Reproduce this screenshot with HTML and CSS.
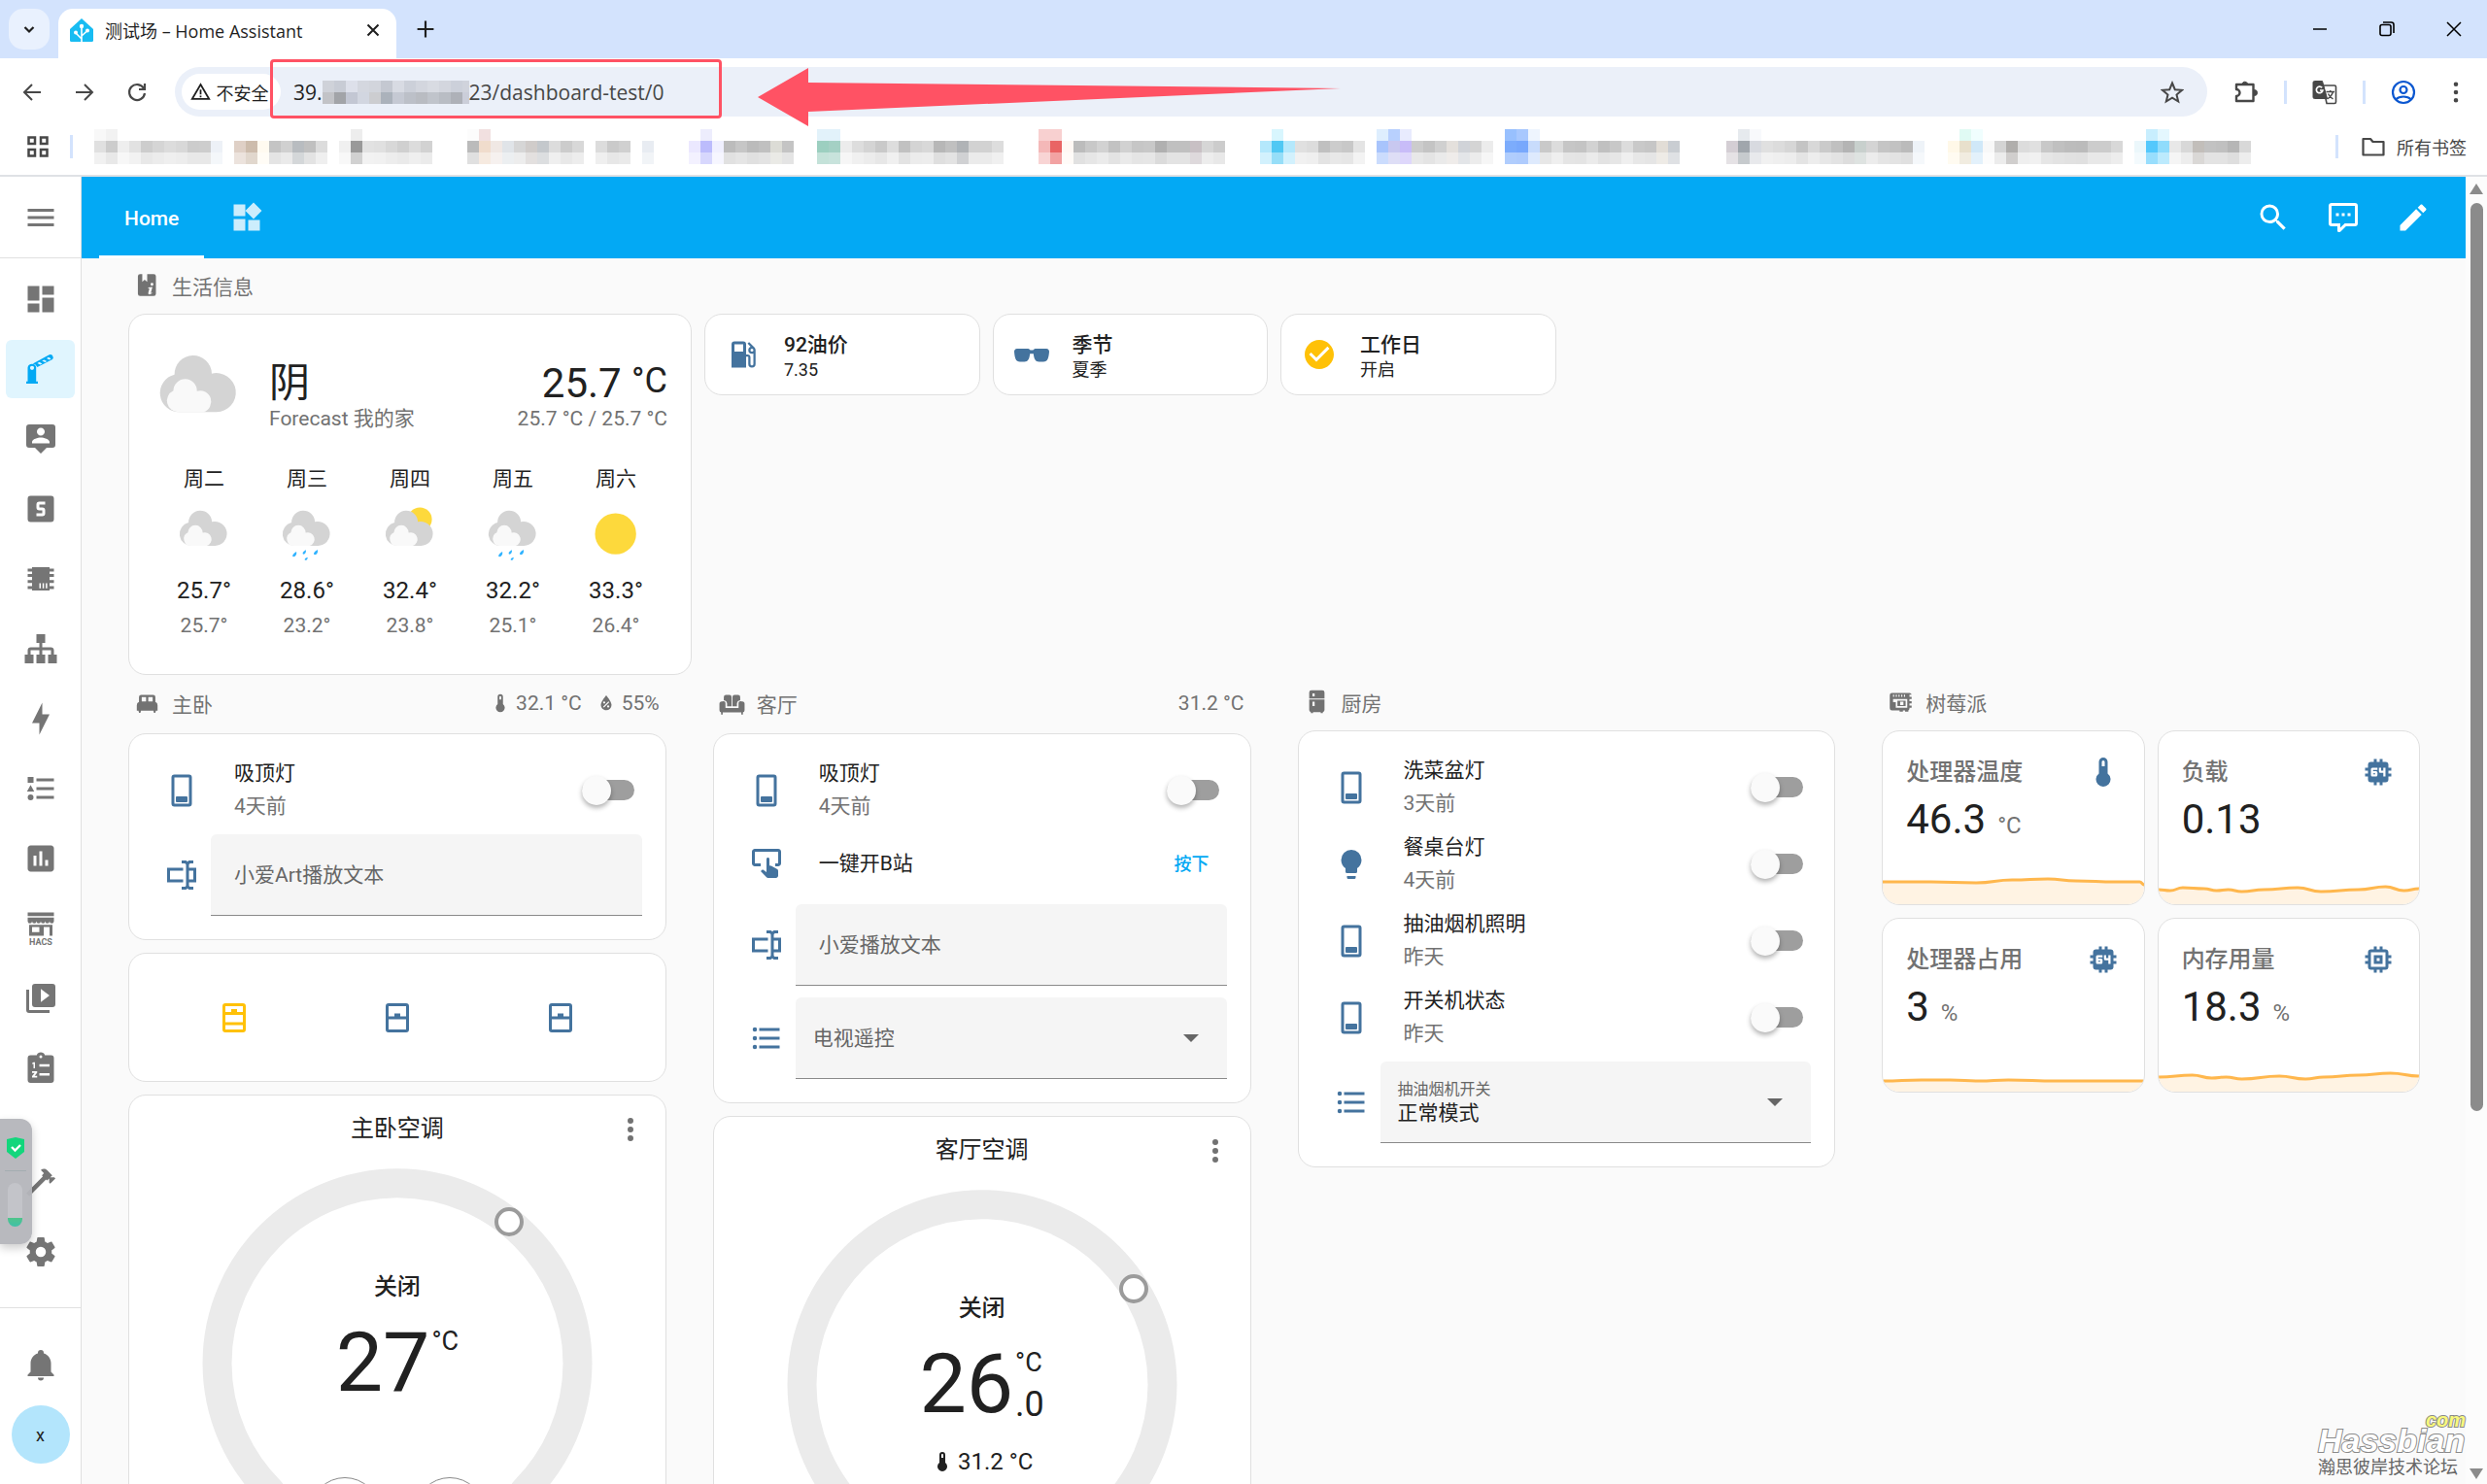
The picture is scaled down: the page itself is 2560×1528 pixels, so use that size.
FILE: index.html
```html
<!DOCTYPE html>
<html lang="zh-CN">
<head>
  <meta charset="utf-8">
  <title>测试场 – Home Assistant</title>
  <link rel="stylesheet" href="styles.css">
</head>
<body>

<!-- Icon set -->
<svg class="sprite" aria-hidden="true">
  <symbol id="menu" viewBox="0 0 24 24"><path d="M3,6H21V8H3V6M3,11H21V13H3V11M3,16H21V18H3V16Z"/></symbol>
  <symbol id="dashboard" viewBox="0 0 24 24"><path d="M13,3V9H21V3M13,21H21V11H13M3,21H11V15H3M3,13H11V3H3V13Z"/></symbol>
  <symbol id="gate" viewBox="0 0 24 24"><path d="M2,22V20.5H3V11A3,3 0 0 1 6,8.5A3,3 0 0 1 8.8,10.5V20.5H10V22ZM6,9.8A1.4,1.4 0 1 0 6,12.6A1.4,1.4 0 1 0 6,9.8Z"/><path d="M6.5,8.3L17.8,2.2A2,2 0 0 1 20,5.4L9.6,10.6A4,4 0 0 0 6.5,8.3ZM9.6,8L11.6,9L13,8.3L11,7.2ZM12.8,6.3L14.9,7.4L16.2,6.7L14.2,5.6ZM16,4.6L18,5.6L19,4.8L17.3,3.9Z"/></symbol>
  <symbol id="account" viewBox="0 0 24 24"><path d="M20,2H4A2,2 0 0,0 2,4V16A2,2 0 0,0 4,18H8L12,22L16,18H20A2,2 0 0,0 22,16V4A2,2 0 0,0 20,2M12,4.3C13.5,4.3 14.7,5.5 14.7,7C14.7,8.5 13.5,9.7 12,9.7C10.5,9.7 9.3,8.5 9.3,7C9.3,5.5 10.5,4.3 12,4.3M18,15H6V14.1C6,12.1 10,11 12,11C14,11 18,12.1 18,14.1V15Z"/></symbol>
  <symbol id="sbox" viewBox="0 0 24 24"><path d="M5,3H19A2,2 0 0,1 21,5V19A2,2 0 0,1 19,21H5A2,2 0 0,1 3,19V5A2,2 0 0,1 5,3M11,7A2,2 0 0,0 9,9V11A2,2 0 0,0 11,13H13V15H9V17H13A2,2 0 0,0 15,15V13A2,2 0 0,0 13,11H11V9H15V7H11Z"/></symbol>
  <symbol id="chip" viewBox="0 0 24 24"><path d="M6,4H18V5H21V7H18V8.7H21V10.7H18V12.8H21V14.8H18V17H21V19H18V20H6V19H3V17H6V14.8H3V12.8H6V10.7H3V8.7H6V7H3V5H6ZM11,15V18.5H12V15ZM13.2,15V18.5H14.2V15ZM15.4,15V18.5H16.4V15Z"/></symbol>
  <symbol id="sitemap" viewBox="0 0 24 24"><path d="M9,2V8H11V11H5C3.89,11 3,11.89 3,13V16H1V22H7V16H5V13H11V16H9V22H15V16H13V13H19V16H17V22H23V16H21V13C21,11.89 20.11,11 19,11H13V8H15V2H9Z"/></symbol>
  <symbol id="bolt" viewBox="0 0 24 24"><path d="M11 15H6L13 1V9H18L11 23V15Z"/></symbol>
  <symbol id="logbook" viewBox="0 0 24 24"><path d="M5,9.5L7.5,14H2.5L5,9.5M3,4H7V8H3V4M5,20A2,2 0 0,0 7,18A2,2 0 0,0 5,16A2,2 0 0,0 3,18A2,2 0 0,0 5,20M9,5V7H21V5H9M9,19H21V17H9V19M9,13H21V11H9V13Z"/></symbol>
  <symbol id="chart" viewBox="0 0 24 24"><path d="M9 17H7V10H9V17M13 17H11V7H13V17M17 17H15V13H17V17M19 3H5C3.9 3 3 3.9 3 5V19C3 20.1 3.9 21 5 21H19C20.1 21 21 20.1 21 19V5C21 3.9 20.1 3 19 3Z"/></symbol>
  <symbol id="media" viewBox="0 0 24 24"><path d="M4,6H2V20A2,2 0 0,0 4,22H18V20H4V6M20,2H8A2,2 0 0,0 6,4V16A2,2 0 0,0 8,18H20A2,2 0 0,0 22,16V4A2,2 0 0,0 20,2M12,14.5V5.5L18,10L12,14.5Z"/></symbol>
  <symbol id="todo" viewBox="0 0 24 24"><path d="M5,3H9.2A3,3 0 0 1 14.8,3H19A2,2 0 0 1 21,5V20A2,2 0 0 1 19,22H5A2,2 0 0 1 3,20V5A2,2 0 0 1 5,3ZM12,3A1,1 0 1 0 12,5A1,1 0 1 0 12,3ZM6,8.5L7,7.8H8V12H7V9H6ZM11,9.2H18V10.8H11ZM6,14H9.5V15L7.8,17.2H9.5V18.4H6V17.3L7.8,15.2H6ZM11,15.4H18V17H11Z"/></symbol>
  <symbol id="hammer" viewBox="0 0 24 24"><path d="M2 19.63L13.43 8.2L12.72 7.5L14.14 6.07L12 3.89C13.2 2.7 15.09 2.7 16.27 3.89L19.87 7.5L18.45 8.91H21.29L22 9.62L18.45 13.21L17.74 12.5V9.62L16.27 11.04L15.56 10.33L4.13 21.76L2 19.63Z"/></symbol>
  <symbol id="cog" viewBox="0 0 24 24"><path d="M12,15.5A3.5,3.5 0 0,1 8.5,12A3.5,3.5 0 0,1 12,8.5A3.5,3.5 0 0,1 15.5,12A3.5,3.5 0 0,1 12,15.5M19.43,12.97C19.47,12.65 19.5,12.33 19.5,12C19.5,11.67 19.47,11.34 19.43,11L21.54,9.37C21.73,9.22 21.78,8.95 21.66,8.73L19.66,5.27C19.54,5.05 19.27,4.96 19.05,5.05L16.56,6.05C16.04,5.66 15.5,5.32 14.87,5.07L14.5,2.42C14.46,2.18 14.25,2 14,2H10C9.75,2 9.54,2.18 9.5,2.42L9.13,5.07C8.5,5.32 7.96,5.66 7.44,6.05L4.95,5.05C4.73,4.96 4.46,5.05 4.34,5.27L2.34,8.73C2.21,8.95 2.27,9.22 2.46,9.37L4.57,11C4.53,11.34 4.5,11.67 4.5,12C4.5,12.33 4.53,12.65 4.57,12.97L2.46,14.63C2.27,14.78 2.21,15.05 2.34,15.27L4.34,18.73C4.46,18.95 4.73,19.03 4.95,18.95L7.44,17.94C7.96,18.34 8.5,18.68 9.13,18.93L9.5,21.58C9.54,21.82 9.75,22 10,22H14C14.25,22 14.46,21.82 14.5,21.58L14.87,18.93C15.5,18.67 16.04,18.34 16.56,17.94L19.05,18.95C19.27,19.03 19.54,18.95 19.66,18.73L21.66,15.27C21.78,15.05 21.73,14.78 21.54,14.63L19.43,12.97Z"/></symbol>
  <symbol id="bell" viewBox="0 0 24 24"><path d="M21,19V20H3V19L5,17V11C5,7.9 7.03,5.17 10,4.29C10,4.19 10,4.1 10,4A2,2 0 0,1 12,2A2,2 0 0,1 14,4C14,4.1 14,4.19 14,4.29C16.97,5.17 19,7.9 19,11V17L21,19M14,21A2,2 0 0,1 12,23A2,2 0 0,1 10,21"/></symbol>
  <symbol id="widgets" viewBox="0 0 24 24"><path d="M3,3H11V11H3V3M16.66,1.69L22.31,7.34L16.66,13L11,7.34L16.66,1.69M13,13.6H21V21H13V13.6M3,13H11V21H3V13Z"/></symbol>
  <symbol id="search" viewBox="0 0 24 24"><path d="M9.5,3A6.5,6.5 0 0,1 16,9.5C16,11.11 15.41,12.59 14.44,13.73L14.71,14H15.5L20.5,19L19,20.5L14,15.5V14.71L13.73,14.44C12.59,15.41 11.11,16 9.5,16A6.5,6.5 0 0,1 3,9.5A6.5,6.5 0 0,1 9.5,3M9.5,5C7,5 5,7 5,9.5C5,12 7,14 9.5,14C12,14 14,12 14,9.5C14,7 12,5 9.5,5Z"/></symbol>
  <symbol id="comment" viewBox="0 0 24 24"><path d="M9,22A1,1 0 0,1 8,21V18H4A2,2 0 0,1 2,16V4C2,2.89 2.9,2 4,2H20A2,2 0 0,1 22,4V16A2,2 0 0,1 20,18H13.9L10.2,21.71C10,21.9 9.75,22 9.5,22H9M10,16V19.08L13.08,16H20V4H4V16H10M17,11H15V9H17V11M13,11H11V9H13V11M9,11H7V9H9V11Z"/></symbol>
  <symbol id="pencil" viewBox="0 0 24 24"><path d="M20.71,7.04C21.1,6.65 21.1,6 20.71,5.63L18.37,3.29C18,2.9 17.35,2.9 16.96,3.29L15.12,5.12L18.87,8.87M3,17.25V21H6.75L17.81,9.93L14.06,6.18L3,17.25Z"/></symbol>
  <symbol id="gas" viewBox="0 0 24 24"><path d="M18,10A1,1 0 0,1 17,9A1,1 0 0,1 18,8A1,1 0 0,1 19,9A1,1 0 0,1 18,10M12,10H6V5H12M19.77,7.23L19.78,7.22L16.06,3.5L15,4.56L17.11,6.67C16.17,7 15.5,7.93 15.5,9A2.5,2.5 0 0,0 18,11.5C18.36,11.5 18.69,11.42 19,11.29V18.5A1,1 0 0,1 18,19.5A1,1 0 0,1 17,18.5V14A2,2 0 0,0 15,12H14V5A2,2 0 0,0 12,3H6A2,2 0 0,0 4,5V21H14V13.5H15.5V18.5A2.5,2.5 0 0,0 18,21A2.5,2.5 0 0,0 20.5,18.5V9C20.5,8.31 20.22,7.68 19.77,7.23Z"/></symbol>
  <symbol id="glasses" viewBox="0 0 24 24"><path d="M2,8H9.5C10.5,8 10.6,9 11.2,9H12.8C13.4,9 13.5,8 14.5,8H22C23.4,8 24,9 24,10C23.6,14.5 23,17 20,17H17C14.5,17 13.6,15 13.2,11.5H10.8C10.4,15 9.500,17 7,17H4C1,17 .4,14.500 0,10C0,9 .6,8 2,8Z"/></symbol>
  <symbol id="check" viewBox="0 0 24 24"><path d="M12 2C6.5 2 2 6.5 2 12S6.5 22 12 22 22 17.5 22 12 17.5 2 12 2M10 17L5 12L6.41 10.59L10 14.17L17.59 6.58L19 8L10 17Z"/></symbol>
  <symbol id="switch" viewBox="0 0 24 24"><path d="M7,1H17A2,2 0 0 1 19,3V21A2,2 0 0 1 17,23H7A2,2 0 0 1 5,21V3A2,2 0 0 1 7,1ZM7,3V21H17V3ZM8.6,16H15.4A.6,.6 0 0 1 16,16.600V19.4A.6,.6 0 0 1 15.4,20H8.600A.6,.6 0 0 1 8,19.4V16.600A.6,.6 0 0 1 8.600,16Z"/></symbol>
  <symbol id="tap" viewBox="0 0 24 24"><path d="M20 20.5C19.97 21.32 19.32 21.97 18.5 22H13C12.62 22 12.26 21.85 12 21.57L8 17.37L8.74 16.6C8.93 16.39 9.2 16.28 9.5 16.28H9.7L12 18V9C12 8.45 12.45 8 13 8S14 8.45 14 9V13.47L15.21 13.6L19.15 15.79C19.68 16.03 20 16.56 20 17.14V20.5M20 2H4C2.9 2 2 2.9 2 4V12C2 13.11 2.9 14 4 14H8V12H4V4H20V12H18V14H20C21.1 14 22 13.1 22 12V4C22 2.89 21.1 2 20 2Z"/></symbol>
  <symbol id="textbox" viewBox="0 0 24 24"><path d="M17,7H22V17H17V19A1,1 0 0,0 18,20H20V22H17.5C16.95,22 16,21.55 16,21C16,21.55 15.05,22 14.5,22H12V20H14A1,1 0 0,0 15,19V5A1,1 0 0,0 14,4H12V2H14.5C15.05,2 16,2.45 16,3C16,2.45 16.95,2 17.5,2H20V4H18A1,1 0 0,0 17,5V7M2,7H13V9H4V15H13V17H2V7M20,15V9H17V15H20Z"/></symbol>
  <symbol id="list" viewBox="0 0 24 24"><path d="M7,5H21V7H7V5M7,13V11H21V13H7M4,4.5A1.5,1.5 0 0,1 5.5,6A1.5,1.5 0 0,1 4,7.5A1.5,1.5 0 0,1 2.5,6A1.5,1.5 0 0,1 4,4.5M4,10.5A1.5,1.5 0 0,1 5.5,12A1.5,1.5 0 0,1 4,13.5A1.5,1.5 0 0,1 2.5,12A1.5,1.5 0 0,1 4,10.5M7,19V17H21V19H7M4,16.5A1.5,1.5 0 0,1 5.5,18A1.5,1.5 0 0,1 4,19.5A1.5,1.5 0 0,1 2.5,18A1.5,1.5 0 0,1 4,16.5Z"/></symbol>
  <symbol id="bulb" viewBox="0 0 24 24"><path d="M12,2A7,7 0 0,0 5,9C5,11.38 6.19,13.47 8,14.74V17A1,1 0 0,0 9,18H15A1,1 0 0,0 16,17V14.74C17.81,13.47 19,11.38 19,9A7,7 0 0,0 12,2M9,21A1,1 0 0,0 10,22H14A1,1 0 0,0 15,21V20H9V21Z"/></symbol>
  <symbol id="thermo" viewBox="0 0 24 24"><path d="M15 13V5A3 3 0 0 0 9 5V13A5 5 0 1 0 15 13M12 4A1 1 0 0 1 13 5V8H11V5A1 1 0 0 1 12 4Z"/></symbol>
  <symbol id="humidity" viewBox="0 0 24 24"><path d="M12,3.25C12,3.25 6,10 6,14C6,17.32 8.69,20 12,20A6,6 0 0,0 18,14C18,10 12,3.25 12,3.25M14.47,9.97L15.53,11.03L9.53,17.03L8.47,15.97M9.75,10A1.25,1.25 0 0,1 11,11.25A1.25,1.25 0 0,1 9.75,12.5A1.25,1.25 0 0,1 8.5,11.25A1.25,1.25 0 0,1 9.75,10M14.25,14.5A1.25,1.25 0 0,1 15.5,15.75A1.25,1.25 0 0,1 14.25,17A1.25,1.25 0 0,1 13,15.75A1.25,1.25 0 0,1 14.25,14.5Z"/></symbol>
  <symbol id="cpu" viewBox="0 0 24 24"><path d="M9,3V5H7A2,2 0 0,0 5,7V9H3V11H5V13H3V15H5V17A2,2 0 0,0 7,19H9V21H11V19H13V21H15V19H17A2,2 0 0,0 19,17V15H21V13H19V11H21V9H19V7A2,2 0 0,0 17,5H15V3H13V5H11V3M8,9H11.5V10.5H8.5V11.25H10.5A1,1 0 0,1 11.5,12.25V14A1,1 0 0,1 10.5,15H8A1,1 0 0,1 7,14V10A1,1 0 0,1 8,9M12.5,9H14V11H15.5V9H17V15H15.5V12.5H13.5A1,1 0 0,1 12.5,11.5M8.5,12.75V13.5H10V12.75"/></symbol>
  <symbol id="memory" viewBox="0 0 24 24"><path d="M17,17H7V7H17M21,11V9H19V7C19,5.89 18.1,5 17,5H15V3H13V5H11V3H9V5H7C5.89,5 5,5.89 5,7V9H3V11H5V13H3V15H5V17A2,2 0 0,0 7,19H9V21H11V19H13V21H15V19H17A2,2 0 0,0 19,17V15H21V13H19V11M13,13H11V11H13M15,9H9V15H15V9Z"/></symbol>
  <symbol id="book" viewBox="0 0 24 24"><path d="M5.500,2H7.500V9L9.700,7.200L12,9V2H18A2,2 0 0 1 20,4V20A2,2 0 0 1 18,22H5.500A2,2 0 0 1 3.500,20V4A2,2 0 0 1 5.500,2ZM16.400,10A1.300,1.300 0 1 0 16.400,12.600A1.300,1.300 0 1 0 16.400,10ZM13,14.200V15H14L13,19.200A1.200,1.200 0 0 0 14.200,20.700L16.500,19.600V18.900L15.300,19.300L16.800,13.700Z"/></symbol>
  <symbol id="bed" viewBox="0 0 24 24"><path d="M6.500,4H17.500A2,2 0 0 1 19.500,6V10.500A3,3 0 0 1 21.500,13.500V18.500H20L19.400,20.500H18.200L17.700,18.500H6.300L5.800,20.500H4.600L4,18.500H2.500V13.500A3,3 0 0 1 4.500,10.500V6A2,2 0 0 1 6.500,4ZM7,6V10H11V6ZM13,6V10H17V6Z"/></symbol>
  <symbol id="sofa" viewBox="0 0 24 24"><path d="M6.5,4H9.5A2,2 0 0 1 11.6,6V14.500H7.500V12A3.500,3.500 0 0 0 4.500,8.800V6A2,2 0 0 1 6.500,4ZM14.500,4H17.500A2,2 0 0 1 19.500,6V8.800A3.500,3.500 0 0 0 16.500,12V14.500H12.400V6A2,2 0 0 1 14.500,4ZM3,10A2,2 0 0 1 6,12V16H18V12A2,2 0 0 1 21,10A2,2 0 0 1 23.500,12V18A2,2 0 0 1 22,20V22H20.500V20H3.500V22H2V20A2,2 0 0 1 .5,18V12A2,2 0 0 1 3,10Z"/></symbol>
  <symbol id="fridge" viewBox="0 0 24 24"><path d="M7,1.500H17A2,2 0 0 1 19,3.500V9H5V3.500A2,2 0 0 1 7,1.500ZM8,4.500V7H10V4.500ZM5,10H19V19.500A2,2 0 0 1 17.500,21.400V22.500H15.500V21.500H8.500V22.500H6.500V21.400A2,2 0 0 1 5,19.500ZM8,12V16H10V12Z"/></symbol>
  <symbol id="board" viewBox="0 0 24 24"><path d="M4,4H20A2,2 0 0 1 22,5.500H20V7.500H22V9.500H20V11.500H22V13.500H20V15.500H22V17.500H20V18.500A2,2 0 0 1 19,20V21H16V20H14V21H11V20H4A2,2 0 0 1 2,18V6A2,2 0 0 1 4,4ZM5,5.500V7.500H6V5.500ZM7.500,5.500V7.500H8.500V5.500ZM10,5.500V7.500H11V5.500ZM12.500,5.500V7.500H13.500V5.500ZM15,5.500V7.500H16V5.500ZM5,9.500V12.500H7.500V17.500H18V9.500ZM9,11H16.500V16H9ZM11.500,12V15H14.500V12Z"/></symbol>
  <symbol id="drawer-open" viewBox="0 0 24 24"><path d="M6,2H18A2,2 0 0 1 20,4V20A2,2 0 0 1 18,22H6A2,2 0 0 1 4,20V4A2,2 0 0 1 6,2ZM6,4V8H10V6H14V8H18V4ZM6,10V15H18V10ZM6,17V20H18V17Z"/></symbol>
  <symbol id="drawer" viewBox="0 0 24 24"><path d="M6,2H18A2,2 0 0 1 20,4V20A2,2 0 0 1 18,22H6A2,2 0 0 1 4,20V4A2,2 0 0 1 6,2ZM6,4V11H10V9H14V11H18V4ZM6,13V20H18V13Z"/></symbol>
  <symbol id="minus" viewBox="0 0 24 24"><path d="M19,13H5V11H19V13Z"/></symbol>
  <symbol id="plus" viewBox="0 0 24 24"><path d="M19,13H13V19H11V13H5V11H11V5H13V11H19V13Z"/></symbol>
  <symbol id="dots" viewBox="0 0 24 24"><path d="M12,16A2,2 0 0,1 14,18A2,2 0 0,1 12,20A2,2 0 0,1 10,18A2,2 0 0,1 12,16M12,10A2,2 0 0,1 14,12A2,2 0 0,1 12,14A2,2 0 0,1 10,12A2,2 0 0,1 12,10M12,4A2,2 0 0,1 14,6A2,2 0 0,1 12,8A2,2 0 0,1 10,6A2,2 0 0,1 12,4Z"/></symbol>
  <symbol id="cloud" viewBox="0 0 17 17">
    <path fill="#d4d4d4" d="M4.9,11.9A3.45,3.45 0 0 1 4,5.1A3.4,3.4 0 0 1 10.8,4.9A3.55,3.55 0 1 1 11.7,11.9Z"/>
    <path fill="#f9f9f9" d="M4.75,11.9A2.05,2.05 0 0 1 3.8,8A2.1,2.1 0 0 1 8.1,8.1A1.95,1.95 0 1 1 9.3,11.9Z"/>
  </symbol>
  <symbol id="rainy" viewBox="0 0 17 17">
    <use href="#cloud" width="17" height="17"/>
    <g fill="#30b3ff"><path d="M5.4,13.600C5.6,14.3 5.200,15 4.600,15.1C4.100,15.1 4.100,14.4 5.4,13.600Z"/><path d="M8.200,13.100C8.300,13.700 8,14.3 7.500,14.4C7.100,14.3 7.100,13.600 8.200,13.100Z"/><path d="M11.600,13C11.800,13.800 11.400,14.4 10.800,14.5C10.300,14.4 10.300,13.700 11.600,13Z"/><path d="M8.700,15.200C8.700,15.700 8.500,16.100 8,16.100C7.700,15.900 7.800,15.500 8.700,15.200Z"/></g>
  </symbol>
  <symbol id="partly" viewBox="0 0 17 17"><circle cx="11.4" cy="4.2" r="3.5" fill="#fdd93c"/><use href="#cloud" width="17" height="17"/></symbol>
  <symbol id="sunny" viewBox="0 0 17 17"><circle cx="8.4" cy="8.4" r="6" fill="#fdd93c"/></symbol>
</svg>

<!-- Browser window -->
<div class="tabstrip">
  <button class="tab-search" aria-label="搜索标签页"><svg class="ui" viewBox="0 0 20 20"><path d="M5.500 8L10 12.500L14.500 8" stroke-width="2.200"/></svg></button>
  <div class="tab">
    <svg class="favicon" viewBox="0 0 24 24"><path fill="#18bcf2" d="M12 0L24 11V22.500A1.500 1.500 0 0 1 22.500 24H1.500A1.500 1.500 0 0 1 0 22.500V11Z"/><path d="M12 24V9M12 21L6.500 15.500M12 18L17.500 13" stroke="#fff" stroke-width="1.600" fill="none"/><circle cx="12" cy="8" r="2.200" fill="#fff"/><circle cx="6" cy="14.500" r="2" fill="#fff"/><circle cx="18" cy="12.500" r="2" fill="#fff"/></svg>
    <span class="tab-title">测试场 – Home Assistant</span>
    <button class="tab-close" aria-label="关闭标签页"><svg class="ui" viewBox="0 0 20 20"><path d="M4.500 4.500L15.500 15.500M15.500 4.500L4.500 15.500" stroke-width="2"/></svg></button>
  </div>
  <button class="tab-new" aria-label="新标签页"><svg class="ui" viewBox="0 0 20 20"><path d="M10 3V17M3 10H17" stroke-width="1.800"/></svg></button>
  <div class="window-buttons">
    <button aria-label="最小化"><svg class="ui" viewBox="0 0 20 20"><path d="M3 10H17" stroke-width="1.500"/></svg></button>
    <button aria-label="还原"><svg class="ui" viewBox="0 0 20 20"><rect x="3" y="5.500" width="11" height="11" rx="2" stroke-width="1.600"/><path d="M6 3H14.500A2.500 2.500 0 0 1 17 5.500V14" stroke-width="1.600"/></svg></button>
    <button aria-label="关闭"><svg class="ui" viewBox="0 0 20 20"><path d="M3 3L17 17M17 3L3 17" stroke-width="1.500"/></svg></button>
  </div>
</div>

<div class="toolbar">
  <button class="nav" aria-label="后退"><svg class="ui" viewBox="0 0 24 24"><path d="M21 12H4M12 4L4 12L12 20" stroke-width="2"/></svg></button>
  <button class="nav" aria-label="前进"><svg class="ui" viewBox="0 0 24 24"><path d="M3 12H20M12 4L20 12L12 20" stroke-width="2"/></svg></button>
  <button class="nav" aria-label="刷新"><svg class="ui" viewBox="0 0 24 24"><path d="M19 8A8 8 0 1 0 20 13M20 3V9H14" stroke-width="2.200"/></svg></button>
  <div class="omnibox">
    <button class="chip"><svg class="ui" viewBox="0 0 24 24"><path d="M12 3.500L22 20.500H2ZM12 9.500V15M12 16.500V18.500" stroke-width="2"/></svg>不安全</button>
    <div class="url"><b>39.</b><svg class="url-mosaic" id="urlMosaic" viewBox="0 0 151 24"></svg>23/dashboard-test/0</div>
    <button class="star" aria-label="添加书签"><svg class="ui" viewBox="0 0 24 24"><path d="M12 2.500L14.800 9.200L22 9.800L16.500 14.500L18.200 21.500L12 17.700L5.800 21.500L7.500 14.500L2 9.800L9.200 9.200Z" stroke-width="2"/></svg></button>
    <div class="mark-box"></div>
    <svg class="mark-arrow" viewBox="0 0 600 60"><path d="M0 30L52 0V15L600 21L52 45V60Z"/></svg>
  </div>
  <button class="tool" aria-label="扩展程序"><svg class="ui" viewBox="0 0 26 26"><path d="M3 5H20.500V22H3V17A3.500 3.500 0 0 0 3 10Z" stroke-width="2.400" stroke-linejoin="round"/><path d="M9 4A3 3 0 0 1 14.500 4ZM21.500 10.500A3 3 0 0 1 21.500 16.500Z" fill="currentColor"/></svg></button>
  <span class="sep"></span>
  <button class="tool" aria-label="翻译"><svg class="ui" viewBox="0 0 26 26"><path d="M11 6H23A1.500 1.500 0 0 1 24.500 7.500V23A1.500 1.500 0 0 1 23 24.500H15L11 6" stroke-width="1.600"/><path d="M2.500 1.500H10.500L15.500 19.500H2.500A1.500 1.500 0 0 1 1 18V3A1.500 1.500 0 0 1 2.500 1.500Z" fill="currentColor"/><path d="M14.500 12.500H23M18.700 11V12.500M21.500 12.500C20.500 16 18 18.500 15.500 20M16.500 14.500C17.500 17 20 19 21.500 20" stroke-width="1.400"/><path d="M10.200 8.300A3.300 3.300 0 1 0 10.900 11H8" stroke="#fff" stroke-width="1.700"/></svg></button>
  <span class="sep"></span>
  <button class="tool profile" aria-label="个人资料"><svg class="ui" viewBox="0 0 26 26"><circle cx="13" cy="13" r="11" stroke-width="2.200"/><circle cx="13" cy="10.500" r="3.500" stroke-width="2.200"/><path d="M5 20.500C9 16.500 17 16.500 21 20.500" stroke-width="2.200"/></svg></button>
  <button class="tool last" aria-label="更多"><svg class="ui" viewBox="0 0 26 26"><path fill="currentColor" stroke="none" d="M13 2.500a2.300 2.300 0 1 1 0 4.600a2.300 2.300 0 1 1 0-4.600ZM13 10.700a2.300 2.300 0 1 1 0 4.600a2.300 2.300 0 1 1 0-4.600ZM13 18.900a2.300 2.300 0 1 1 0 4.600a2.300 2.300 0 1 1 0-4.600Z"/></svg></button>
</div>

<div class="bookmarks">
  <button class="apps" aria-label="应用"><svg class="ui" viewBox="0 0 24 24"><path d="M2.500 2.500H9V9H2.500ZM15 2.500H21.500V9H15ZM2.500 15H9V21.500H2.500ZM15 15H21.500V21.500H15Z" stroke-width="2.500"/></svg></button>
  <span class="sep"></span>
  <svg class="mosaic" id="mosaic" viewBox="0 0 2220 36"></svg>
  <span class="sep"></span>
  <button class="all-bookmarks"><svg class="ui" viewBox="0 0 24 24"><path d="M1.500 4H9L11.500 7H22.500V20.500H1.500Z" stroke-width="2.200" stroke-linejoin="round"/></svg>所有书签</button>
</div>

<!-- Home Assistant -->
<div class="app">
  <nav class="sidebar">
    <button class="menu" aria-label="菜单"><svg class="icon"><use href="#menu"/></svg></button>
    <div class="side-list">
      <a href="#" aria-label="概览"><svg class="icon"><use href="#dashboard"/></svg></a>
      <a href="#" class="selected" aria-label="测试场"><svg class="icon"><use href="#gate"/></svg></a>
      <a href="#" aria-label="地图"><svg class="icon"><use href="#account"/></svg></a>
      <a href="#" aria-label="S"><svg class="icon"><use href="#sbox"/></svg></a>
      <a href="#" aria-label="硬件"><svg class="icon"><use href="#chip"/></svg></a>
      <a href="#" aria-label="流程"><svg class="icon"><use href="#sitemap"/></svg></a>
      <a href="#" aria-label="能源"><svg class="icon"><use href="#bolt"/></svg></a>
      <a href="#" aria-label="日志"><svg class="icon"><use href="#logbook"/></svg></a>
      <a href="#" aria-label="历史"><svg class="icon"><use href="#chart"/></svg></a>
      <a href="#"><svg class="icon" viewBox="0 0 24 24"><path d="M3,1H21V3.5H3ZM3,4.5H21V7A1.5,1.5 0 0 1 18,7A1.5,1.5 0 0 1 15,7A1.5,1.5 0 0 1 12,7A1.5,1.5 0 0 1 9,7A1.5,1.5 0 0 1 6,7A1.5,1.5 0 0 1 3,7ZM4,9.5H20V17H4ZM6,11V14.5H11V11ZM14,11V17H18V11Z"/><text x="12" y="23" font-size="6" font-weight="700" text-anchor="middle">HACS</text></svg></a>
      <a href="#" aria-label="媒体"><svg class="icon"><use href="#media"/></svg></a>
      <a href="#" aria-label="待办"><svg class="icon"><use href="#todo"/></svg></a>
    </div>
    <div class="side-tools">
      <a href="#" aria-label="开发者工具"><svg class="icon"><use href="#hammer"/></svg></a>
      <a href="#" aria-label="配置"><svg class="icon"><use href="#cog"/></svg></a>
    </div>
    <div class="side-user">
      <a href="#" aria-label="通知"><svg class="icon"><use href="#bell"/></svg></a>
      <a href="#" class="avatar">x</a>
    </div>
  </nav>

  <main class="main">
    <header class="header">
      <a href="#" class="view active">Home</a>
      <a href="#" class="view" aria-label="组件"><svg class="icon"><use href="#widgets"/></svg></a>
      <div class="header-actions">
        <button aria-label="搜索"><svg class="icon"><use href="#search"/></svg></button>
        <button aria-label="助手"><svg class="icon"><use href="#comment"/></svg></button>
        <button aria-label="编辑"><svg class="icon"><use href="#pencil"/></svg></button>
      </div>
    </header>

    <div class="content">
      <h2 class="title"><svg class="icon"><use href="#book"/></svg>生活信息</h2>
      <div class="info-row">
        <section class="card weather">
          <div class="now">
            <svg class="now-icon"><use href="#cloud"/></svg>
            <div class="now-text">
              <div class="now-main">阴</div>
              <div class="now-sub">Forecast 我的家</div>
            </div>
            <div class="now-text right">
              <div class="now-main">25.7 <span class="deg">°C</span></div>
              <div class="now-sub">25.7 °C / 25.7 °C</div>
            </div>
          </div>
          <div class="forecast">
            <div class="day"><span>周二</span><svg><use href="#cloud"/></svg><span class="hi">25.7°</span><span class="lo">25.7°</span></div>
            <div class="day"><span>周三</span><svg><use href="#rainy"/></svg><span class="hi">28.6°</span><span class="lo">23.2°</span></div>
            <div class="day"><span>周四</span><svg><use href="#partly"/></svg><span class="hi">32.4°</span><span class="lo">23.8°</span></div>
            <div class="day"><span>周五</span><svg><use href="#rainy"/></svg><span class="hi">32.2°</span><span class="lo">25.1°</span></div>
            <div class="day"><span>周六</span><svg><use href="#sunny"/></svg><span class="hi">33.3°</span><span class="lo">26.4°</span></div>
          </div>
        </section>
        <section class="card tile"><svg class="icon"><use href="#gas"/></svg><div><div class="tile-name">92油价</div><div class="tile-state">7.35</div></div></section>
        <section class="card tile"><svg class="icon"><use href="#glasses"/></svg><div><div class="tile-name">季节</div><div class="tile-state">夏季</div></div></section>
        <section class="card tile on"><svg class="icon"><use href="#check"/></svg><div><div class="tile-name">工作日</div><div class="tile-state">开启</div></div></section>
      </div>

      <div class="columns">
        <!-- Bedroom -->
        <div class="column">
          <h2 class="title tall"><svg class="icon"><use href="#bed"/></svg>主卧
            <span class="badges"><span class="badge"><svg class="icon"><use href="#thermo"/></svg>32.1 °C</span><span class="badge"><svg class="icon"><use href="#humidity"/></svg>55%</span></span>
          </h2>
          <section class="card entities">
            <div class="row">
              <svg class="icon"><use href="#switch"/></svg>
              <label class="row-text" for="bedLight">吸顶灯<small>4天前</small></label>
              <input class="toggle" type="checkbox" id="bedLight">
            </div>
            <div class="row">
              <svg class="icon"><use href="#textbox"/></svg>
              <input class="field" type="text" placeholder="小爱Art播放文本" aria-label="小爱Art播放文本">
            </div>
          </section>
          <section class="card glance">
            <button class="on" aria-label="抽屉一"><svg class="icon"><use href="#drawer-open"/></svg></button>
            <button aria-label="抽屉二"><svg class="icon"><use href="#drawer"/></svg></button>
            <button aria-label="抽屉三"><svg class="icon"><use href="#drawer"/></svg></button>
          </section>
          <section class="card thermostat">
            <div class="thermo-head"><h3>主卧空调</h3><button aria-label="更多信息"><svg class="icon"><use href="#dots"/></svg></button></div>
            <div class="dial">
              <svg class="ring" viewBox="0 0 402 402"><path d="M70 332A185.500 185.500 0 1 1 332 332"/><circle cx="316" cy="55" r="13"/></svg>
              <div class="dial-info">
                <div class="mode">关闭</div>
                <div class="temp"><span>27</span><span class="unit">°C</span></div>
                <div class="current"></div>
                <div class="steps"><button aria-label="降低"><svg class="icon"><use href="#minus"/></svg></button><button aria-label="升高"><svg class="icon"><use href="#plus"/></svg></button></div>
              </div>
            </div>
          </section>
        </div>

        <!-- Living room -->
        <div class="column">
          <h2 class="title tall"><svg class="icon"><use href="#sofa"/></svg>客厅
            <span class="badges"><span class="badge">31.2 °C</span></span>
          </h2>
          <section class="card entities">
            <div class="row">
              <svg class="icon"><use href="#switch"/></svg>
              <label class="row-text" for="livingLight">吸顶灯<small>4天前</small></label>
              <input class="toggle" type="checkbox" id="livingLight">
            </div>
            <div class="row">
              <svg class="icon"><use href="#tap"/></svg>
              <span class="row-text">一键开B站</span>
              <button class="press">按下</button>
            </div>
            <div class="row">
              <svg class="icon"><use href="#textbox"/></svg>
              <input class="field" type="text" placeholder="小爱播放文本" aria-label="小爱播放文本">
            </div>
            <div class="row">
              <svg class="icon"><use href="#list"/></svg>
              <div class="select">
                <select class="field empty" aria-label="电视遥控"><option>电视遥控</option></select>
              </div>
            </div>
          </section>
          <section class="card thermostat">
            <div class="thermo-head"><h3>客厅空调</h3><button aria-label="更多信息"><svg class="icon"><use href="#dots"/></svg></button></div>
            <div class="dial">
              <svg class="ring" viewBox="0 0 402 402"><path d="M70 332A185.500 185.500 0 1 1 332 332"/><circle cx="357" cy="102" r="13"/></svg>
              <div class="dial-info">
                <div class="mode">关闭</div>
                <div class="temp"><span>26</span><span class="unit">°C<small>.0</small></span></div>
                <div class="current"><svg class="icon"><use href="#thermo"/></svg>31.2 °C</div>
              </div>
            </div>
          </section>
        </div>

        <!-- Kitchen -->
        <div class="column">
          <h2 class="title"><svg class="icon"><use href="#fridge"/></svg>厨房</h2>
          <section class="card entities">
            <div class="row">
              <svg class="icon"><use href="#switch"/></svg>
              <label class="row-text" for="sink">洗菜盆灯<small>3天前</small></label>
              <input class="toggle" type="checkbox" id="sink">
            </div>
            <div class="row">
              <svg class="icon"><use href="#bulb"/></svg>
              <label class="row-text" for="table">餐桌台灯<small>4天前</small></label>
              <input class="toggle" type="checkbox" id="table">
            </div>
            <div class="row">
              <svg class="icon"><use href="#switch"/></svg>
              <label class="row-text" for="hoodLight">抽油烟机照明<small>昨天</small></label>
              <input class="toggle" type="checkbox" id="hoodLight">
            </div>
            <div class="row">
              <svg class="icon"><use href="#switch"/></svg>
              <label class="row-text" for="power">开关机状态<small>昨天</small></label>
              <input class="toggle" type="checkbox" id="power">
            </div>
            <div class="row">
              <svg class="icon"><use href="#list"/></svg>
              <div class="select">
                <label class="float" for="hood">抽油烟机开关</label>
                <select class="field filled" id="hood"><option>正常模式</option></select>
              </div>
            </div>
          </section>
        </div>

        <!-- Raspberry Pi -->
        <div class="column">
          <h2 class="title"><svg class="icon"><use href="#board"/></svg>树莓派</h2>
          <div class="sensors">
            <section class="card sensor">
              <div class="sensor-head">处理器温度<svg class="icon"><use href="#thermo"/></svg></div>
              <div class="sensor-value">46.3<small>°C</small></div>
              <svg class="graph" viewBox="0 0 270 62" preserveAspectRatio="none" data-points="0,39 50,39 97,40 134,37 171,36 200,38 241,39 266,39 271,42"></svg>
            </section>
            <section class="card sensor">
              <div class="sensor-head">负载<svg class="icon"><use href="#cpu"/></svg></div>
              <div class="sensor-value">0.13</div>
              <svg class="graph" viewBox="0 0 270 62" preserveAspectRatio="none" data-points="0,47 12,48 25,45 47,46 60,48 72,47 86,49 109,47 144,45 168,49 207,47 235,44 254,48 270,46"></svg>
            </section>
            <section class="card sensor">
              <div class="sensor-head">处理器占用<svg class="icon"><use href="#cpu"/></svg></div>
              <div class="sensor-value">3<small>%</small></div>
              <svg class="graph" viewBox="0 0 270 62" preserveAspectRatio="none" data-points="0,51 40,50 70,50 100,51 130,50 180,51 270,51"></svg>
            </section>
            <section class="card sensor">
              <div class="sensor-head">内存用量<svg class="icon"><use href="#memory"/></svg></div>
              <div class="sensor-value">18.3<small>%</small></div>
              <svg class="graph" viewBox="0 0 270 62" preserveAspectRatio="none" data-points="0,47 35,45 55,48 70,47 86,49 125,46 152,49 171,47 207,45 240,43 270,46"></svg>
            </section>
          </div>
        </div>
      </div>
    </div>
  </main>

  <div class="scrollbar">
    <svg viewBox="0 0 14 12"><path d="M7 0L14 11H0Z"/></svg>
    <div class="thumb"></div>
    <svg viewBox="0 0 14 12"><path d="M7 11L14 0H0Z"/></svg>
  </div>
</div>

<!-- Desktop security widget -->
<div class="dock">
  <svg viewBox="0 0 18 22"><path fill="#12d67c" d="M0 2L9 0L18 2V15L9 22L0 15Z"/><path d="M5 10L8.500 13.500L14 8" stroke="#fff" stroke-width="2.400" fill="none"/></svg>
  <hr>
  <div class="tube"></div>
</div>

<div class="watermark">
  <div class="wm-com">com</div>
  <div class="wm-name">Hassbian</div>
  <div class="wm-sub">瀚思彼岸技术论坛</div>
</div>

<script>
const NS = "http://www.w3.org/2000/svg";

function addRect(svg, x, y, size, fill, opacity) {
  const r = document.createElementNS(NS, "rect");
  r.setAttribute("x", x);
  r.setAttribute("y", y);
  r.setAttribute("width", size);
  r.setAttribute("height", size);
  r.setAttribute("fill", fill);
  if (opacity) r.setAttribute("opacity", opacity);
  svg.appendChild(r);
}

// first column of each run, then its colours (two digits = a grey)
const runs = [
  [0, "e0 cc ee e2 cd d5 dc d8 cc cd edf1f7"],
  [12, "dfd0c6 cdbcac fffaf0 c4 d0 b8bcc0 c0 dc"],
  [21, "f0 99 e2 e0 d8 d0 dc d2"],
  [32, "bb f0dccc f0e8e4 e0e4e8 d6 d0ccca c4c8cc dc cc d8"],
  [43, "dc ca d0"], [47, "e8ecf2"],
  [51, "ebe8ff bcbcfc f0f0ff bc c6 bb c0 dcdcd6 c4"],
  [62, "9ccfc0 a4d0c4 ec dd d4 c9 dd c1 d4 d8 b7 c0 b0b3b6 d2 d2 dd"],
  [81, "f4b8b8 e96464 fff8f4 bc c8 d2 c2 d1 c6 c8 b0 c0 c0 c8c0c4 d6 cc"],
  [100, "b4e8fc 50c8f4 b4e8fc e0 dc c0 cc c8 e4"],
  [110, "a8c4fc c8c8f0 c8bcf8 cc c4 d0 e4e0dc d0d3d8 d4 ec"],
  [121, "7cacfc 78a8fc c8dcfc c9 dc c6 c4 d2 c0 c8 dc c9 c6 e2ddd6 c9cdd2"],
  [140, "d4ced4 a0a6ac d8dae0 e0 dc d6 c4 d8 ca c0 b4 c8d0cd d4 c5 c2 bb eef3f8"],
  [159, "fff8e8 e8e0cc d0e8f8 f8 d4 b0aeac dc e0 c8 c0 bc bb cc cc d8"],
  [175, "ebf7fb 54c8fc 90dcfc e8 d8 c2beba c2 c0 b6 d8"]
];
// favicons also reach into the top row
const tops = {0: "f8f8f8", 1: "f2f2f2", 22: "ededed", 32: "fcfcfc", 33: "f1e0e0", 52: "ededfd",
  62: "e2f2fa", 63: "e2f2fa", 81: "f8d0d0", 82: "f8d0d0", 101: "d8f6fe", 110: "deeefe", 111: "b8d0fe",
  112: "e8ebfe", 121: "98c0fe", 122: "a8c8fe", 123: "eef5fe", 141: "e6eaee", 142: "f8f9fc",
  160: "e0faf4", 161: "f0fefe", 176: "c8eefe", 177: "e4f7fe"};

const mosaic = document.getElementById("mosaic");
runs.forEach(([start, colors]) => {
  colors.split(" ").forEach((c, i) => {
    const fill = "#" + (c.length === 2 ? c + c + c : c);
    addRect(mosaic, (start + i) * 12, 12, 12, fill);
    addRect(mosaic, (start + i) * 12, 24, 12, fill, c.length === 2 ? 0.45 : 0.6);
  });
});
Object.keys(tops).forEach(i => addRect(mosaic, i * 12, 0, 12, "#" + tops[i]));

const urlMosaic = document.getElementById("urlMosaic");
"cfd2d9 c8ccd5 dde0ea d4d7df d2d5dc c4c8d1 d8dbe3 ccd0d9 d3d6de d8dbe2 d3d6de ccd0da d0d3dc|c2c3c7 a2a4a8 c3c7d3 d2d6e0 cccdd0 abb2bb c5c9d3 bcc0c8 b9bcc2 c0c4cb b9bdc4 aeb1b8 cbced9".split("|").forEach((row, y) => {
  row.split(" ").forEach((c, i) => addRect(urlMosaic, i * 12, y * 12, 12, "#" + c));
});

// history graphs: smooth line with a tinted area below
document.querySelectorAll(".graph").forEach(svg => {
  const pts = svg.dataset.points.split(" ").map(p => p.split(",").map(Number));
  let d = "M" + pts[0];
  for (let i = 1; i < pts.length; i++) {
    const mid = (pts[i - 1][0] + pts[i][0]) / 2;
    d += ` C${mid},${pts[i - 1][1]} ${mid},${pts[i][1]} ${pts[i]}`;
  }
  svg.innerHTML = `<path class="area" d="${d} V62 H0 Z"/><path class="line" d="${d}"/>`;
});
</script>

</body>
</html>
```
FILE: styles.css
```css
* {
  box-sizing: border-box;
}

body {
  margin: 0;
  height: 100vh;
  display: flex;
  flex-direction: column;
  overflow: hidden;
  background: #fff;
  color: #212121;
  font-family: Roboto, "Noto Sans CJK SC", sans-serif;
  font-size: 21px;
}

button {
  font: inherit;
  color: inherit;
  background: none;
  border: none;
  padding: 0;
  display: flex;
  align-items: center;
  justify-content: center;
  cursor: pointer;
}

a {
  color: inherit;
  text-decoration: none;
}

h2, h3 {
  margin: 0;
  font-weight: 400;
}

.sprite {
  position: absolute;
  width: 0;
  height: 0;
}

.icon {
  width: 36px;
  height: 36px;
  flex: none;
  fill: currentColor;
  fill-rule: evenodd;
}

.ui {
  width: 24px;
  height: 24px;
  flex: none;
  fill: none;
  stroke: currentColor;
}

/* Browser chrome */
.tabstrip, .toolbar, .bookmarks {
  display: flex;
  align-items: center;
  flex: none;
  font-family: "Open Sans", "Noto Sans CJK SC", sans-serif;
  color: #474747;
}

.tabstrip {
  height: 60px;
  padding-left: 9px;
  background: #d3e3fd;
  color: #1f1f1f;
}

.tab-search {
  width: 42px;
  height: 42px;
  border-radius: 15px;
  background: #e9f1fe;
}

.tab-search .ui, .tab-close .ui {
  width: 20px;
  height: 20px;
}

.tab {
  align-self: flex-end;
  display: flex;
  align-items: center;
  width: 348px;
  height: 51px;
  margin-left: 9px;
  padding: 0 14px 8px 12px;
  border-radius: 15px 15px 0 0;
  background: #fff;
}

.favicon {
  width: 24px;
  height: 24px;
}

.tab-title {
  flex: 1;
  margin-left: 12px;
  font-size: 18px;
  white-space: nowrap;
}

.tab-new {
  width: 60px;
  height: 42px;
}

.window-buttons {
  display: flex;
  margin-left: auto;
  color: #000;
}

.window-buttons button {
  width: 69px;
  height: 60px;
}

.window-buttons .ui {
  width: 20px;
  height: 20px;
}

.toolbar {
  height: 69px;
  padding: 0 9px 0 6px;
  background: #fff;
  border-radius: 12px 12px 0 0;
}

.nav {
  width: 54px;
  height: 51px;
}

.omnibox {
  position: relative;
  flex: 1;
  display: flex;
  align-items: center;
  height: 51px;
  margin-left: 12px;
  padding: 0 24px 0 7px;
  border-radius: 26px;
  background: #ebf0f9;
}

.chip {
  width: 102px;
  height: 37px;
  gap: 6px;
  padding-right: 4px;
  border-radius: 19px;
  background: #fff;
  font-size: 18px;
  color: #1f1f1f;
  white-space: nowrap;
}

.chip .ui {
  width: 21px;
  height: 21px;
}

.url {
  display: flex;
  align-items: center;
  margin-left: 13px;
  color: #474747;
}

.url b {
  font-weight: 400;
  color: #1f1f1f;
}

.url-mosaic {
  width: 151px;
  height: 24px;
}

.star {
  margin-left: auto;
}

/* Red annotation drawn over the address bar */
.mark-box {
  position: absolute;
  left: 98px;
  top: -8px;
  width: 465px;
  height: 61px;
  border: 3px solid #ff5264;
  border-radius: 4px;
}

.mark-arrow {
  position: absolute;
  left: 600px;
  top: 1px;
  width: 600px;
  height: 60px;
  fill: #ff5264;
}

.tool {
  width: 46px;
  height: 46px;
}

.omnibox + .tool {
  margin-left: 17px;
}

.tool .ui {
  width: 26px;
  height: 26px;
}

.profile {
  color: #0b57d0;
}

.last {
  margin-left: 8px;
}

.sep {
  width: 3px;
  height: 24px;
  margin: 0 16px;
  background: #d3e3fd;
}

.bookmarks {
  height: 53px;
  padding: 0 21px 8px 16px;
  border-bottom: 2px solid #dfe1e5;
}

.apps {
  width: 46px;
  height: 46px;
}

.bookmarks .sep {
  margin: 0 12px 0 10px;
  flex: none;
}

.mosaic {
  flex: none;
  width: 2220px;
  height: 36px;
  margin: 0 auto 0 10px;
}

.all-bookmarks {
  gap: 12px;
  margin-left: 12px;
  font-size: 18px;
  white-space: nowrap;
}

/* App shell */
.app {
  flex: 1;
  min-height: 0;
  display: flex;
}

.sidebar {
  width: 84px;
  flex: none;
  display: flex;
  flex-direction: column;
  border-right: 1px solid #e0e0e0;
  color: #757575;
}

.menu {
  height: 84px;
  flex: none;
  border-bottom: 1px solid #e0e0e0;
}

.side-list, .side-tools, .side-user {
  display: flex;
  flex-direction: column;
  gap: 12px;
  padding: 12px 6px;
}

.side-tools {
  margin-top: auto;
  padding-bottom: 27px;
}

.side-user {
  padding-bottom: 21px;
  padding-top: 28px;
  border-top: 1px solid #e0e0e0;
}

.sidebar a {
  display: flex;
  align-items: center;
  justify-content: center;
  height: 60px;
  border-radius: 6px;
}

.sidebar .selected {
  background: #e0f5fe;
  color: #03a9f4;
}

.sidebar .avatar {
  width: 60px;
  margin: 0 auto;
  border-radius: 50%;
  background: #b3e5fc;
  color: #212121;
  font-size: 18px;
}

.main {
  flex: 1;
  min-width: 0;
  display: flex;
  flex-direction: column;
  background: #fafafa;
}

.header {
  flex: none;
  display: flex;
  height: 84px;
  padding: 0 18px;
  background: #03a9f4;
  color: #fff;
}

.view {
  display: flex;
  align-items: center;
  padding: 0 26px;
  font-weight: 500;
}

.view.active {
  box-shadow: inset 0 -3px #fff;
  padding-top: 2px;
}

.view .icon {
  opacity: 0.8;
}

.header-actions {
  display: flex;
  margin-left: auto;
}

.header-actions button {
  width: 72px;
}

.content {
  flex: 1;
  min-height: 0;
  overflow: hidden;
  padding: 0 47px 0 48px;
}

.title {
  display: flex;
  align-items: center;
  gap: 12px;
  height: 57px;
  padding: 0 0 2px 6px;
  font-size: 21px;
  color: #727272;
}

.title.tall {
  height: 60px;
}

.title .icon {
  width: 27px;
  height: 27px;
}

.badges {
  display: flex;
  gap: 14px;
  margin-left: auto;
  padding-right: 7px;
}

.badge {
  display: flex;
  align-items: center;
  gap: 5px;
}

.badge .icon {
  width: 22px;
  height: 22px;
}

.card {
  background: #fff;
  border: 1px solid #e0e0e0;
  border-radius: 18px;
}

/* Weather and tiles */
.info-row {
  display: grid;
  grid-template-columns: repeat(8, 1fr);
  gap: 13px;
  align-items: start;
}

.weather {
  grid-column: span 2;
  padding: 33px 24px 32px;
}

.now {
  display: flex;
  align-items: center;
}

.now-icon {
  width: 96px;
  height: 96px;
  margin-right: 24px;
}

.now-text {
  padding-top: 10px;
}

.now-main {
  font-size: 42px;
  line-height: 42px;
}

.now-sub, .lo {
  color: #727272;
}

.now-sub {
  line-height: 30px;
}

.deg {
  font-size: 36px;
  vertical-align: top;
  line-height: 36px;
}

.right {
  margin-left: auto;
  text-align: right;
}

.forecast {
  display: grid;
  grid-template-columns: repeat(5, 1fr);
  margin-top: 24px;
}

.day {
  display: flex;
  flex-direction: column;
  align-items: center;
  line-height: 32px;
}

.day svg {
  width: 60px;
  height: 60px;
  margin: 11px 0 10px;
}

.hi, .lo {
  line-height: 36px;
}

.hi {
  font-size: 24px;
}

.tile {
  display: flex;
  align-items: center;
  gap: 24px;
  height: 84px;
  padding: 0 21px;
}

.tile .icon, .row .icon, .glance .icon, .sensor .icon {
  color: #44739e;
}

.tile.on .icon, .glance .on .icon {
  color: #ffc107;
}

.tile-name {
  padding-top: 3px;
  font-weight: 500;
  line-height: 28px;
}

.tile-state {
  font-size: 18px;
  line-height: 24px;
}

/* Room columns */
.columns {
  display: grid;
  grid-template-columns: repeat(4, 1fr);
  gap: 48px;
}

.column {
  display: flex;
  flex-direction: column;
  min-width: 0;
}

.column > .card + .card {
  margin-top: 13px;
}

.entities {
  display: flex;
  flex-direction: column;
  gap: 12px;
  padding: 24px;
}

.row {
  display: flex;
  align-items: center;
  min-height: 60px;
}

.row > .icon {
  margin: 0 12px;
}

.row-text {
  flex: 1;
  margin-left: 24px;
  line-height: 33px;
}

.row-text small {
  display: block;
  font-size: 21px;
  line-height: 34px;
  color: #727272;
}

.toggle {
  appearance: none;
  width: 54px;
  height: 21px;
  margin: 0 8px 0 0;
  border-radius: 11px;
  background: #9e9e9e;
  display: flex;
  align-items: center;
}

.toggle::before {
  content: "";
  width: 30px;
  height: 30px;
  flex: none;
  border-radius: 50%;
  background: #fafafa;
  box-shadow: 0 3px 5px rgba(0, 0, 0, 0.3);
}

.toggle:checked {
  justify-content: flex-end;
}

.press {
  margin-right: 18px;
  padding-bottom: 3px;
  font-size: 18px;
  font-weight: 500;
  color: #03a9f4;
}

.field {
  flex: 1;
  width: 100%;
  height: 84px;
  min-width: 0;
  padding: 0 24px;
  border: none;
  border-bottom: 1px solid #8a8a8a;
  border-radius: 6px 6px 0 0;
  background: #f5f5f5;
  font: inherit;
  color: #212121;
  appearance: none;
}

.field::placeholder {
  color: #666;
}

.select {
  position: relative;
  flex: 1;
  display: flex;
}

.select::after {
  content: "";
  position: absolute;
  right: 29px;
  top: 38px;
  border: 8px solid transparent;
  border-top-color: #666;
  border-bottom: none;
}

.select .field {
  padding: 0 18px;
}

.select .empty {
  color: #666;
}

.select .filled {
  padding-top: 22px;
}

.float {
  position: absolute;
  left: 18px;
  top: 17px;
  font-size: 16px;
  line-height: 24px;
  color: #666;
}

.glance {
  display: grid;
  grid-template-columns: repeat(3, 1fr);
  height: 133px;
  padding: 0 24px;
}

/* Thermostats */
.thermo-head {
  display: grid;
  align-items: center;
  height: 75px;
  padding-bottom: 5px;
}

.thermo-head > * {
  grid-area: 1 / 1;
}

.thermo-head h3 {
  font-size: 24px;
  line-height: 32px;
  padding-bottom: 2px;
  text-align: center;
}

.thermo-head button {
  justify-self: end;
  margin-right: 18px;
  color: #727272;
}

.dial {
  display: grid;
  justify-content: center;
}

.dial > * {
  grid-area: 1 / 1;
}

.ring {
  width: 402px;
  height: 402px;
  fill: none;
}

.ring path {
  stroke: #ebebeb;
  stroke-width: 30;
  stroke-linecap: round;
}

.ring circle {
  fill: #fff;
  stroke: #9b9b9b;
  stroke-width: 4;
}

.dial-info {
  display: flex;
  flex-direction: column;
  align-items: center;
  padding-top: 104px;
}

.mode {
  font-size: 24px;
  font-weight: 500;
  line-height: 36px;
}

.temp {
  display: flex;
  height: 100px;
  margin-top: 10px;
  font-size: 86px;
  line-height: 100px;
}

.temp .unit {
  display: flex;
  flex-direction: column;
  justify-content: space-between;
  padding: 12px 0 13px 2px;
  font-size: 27px;
  line-height: 32px;
}

.unit small {
  font-size: 36px;
}

.current {
  display: flex;
  align-items: center;
  gap: 4px;
  height: 36px;
  margin: 12px 0 20px;
  font-size: 24px;
}

.current .icon {
  width: 24px;
  height: 24px;
}

.steps {
  display: flex;
  gap: 36px;
}

.steps button {
  width: 72px;
  height: 72px;
  border: 1px solid #8a8a8a;
  border-radius: 50%;
}

/* Sensors */
.sensors {
  display: grid;
  grid-template-columns: 1fr 1fr;
  gap: 13px;
}

.sensor {
  overflow: hidden;
  padding-top: 24px;
}

.sensor-head {
  display: flex;
  justify-content: space-between;
  padding: 0 24px;
  font-size: 24px;
  font-weight: 500;
  line-height: 36px;
  color: #727272;
}

.sensor-value {
  padding: 6px 24px 0;
  font-size: 42px;
  line-height: 50px;
}

.sensor-value small {
  margin-left: 12px;
  font-size: 24px;
  line-height: 24px;
  color: #727272;
}

.graph {
  display: block;
  width: 100%;
  height: 62px;
}

.graph .area {
  fill: #fff3e3;
}

.graph .line {
  fill: none;
  stroke: #ffb74d;
  stroke-width: 3;
}

/* Page scrollbar */
.scrollbar {
  flex: none;
  width: 22px;
  display: flex;
  flex-direction: column;
  align-items: center;
  padding: 7px 0 4px;
  background: #fcfcfc;
}

.scrollbar svg {
  width: 14px;
  height: 12px;
  fill: #8b8b8b;
}

.scrollbar .thumb {
  width: 13px;
  height: 70%;
  margin: 8px 0 auto;
  border-radius: 7px;
  background: #8b8b8b;
}

/* Widget docked on the screen edge */
.dock {
  position: absolute;
  left: 0;
  top: 1152px;
  width: 33px;
  display: flex;
  flex-direction: column;
  align-items: center;
  padding: 19px 2px 18px 0;
  border-radius: 0 12px 12px 0;
  background: rgba(180, 181, 186, 0.95);
  box-shadow: 0 4px 10px rgba(0, 0, 0, 0.2);
}

.dock svg {
  width: 18px;
  height: 22px;
}

.dock hr {
  width: 22px;
  margin: 12px 0;
  border: none;
  border-top: 1px solid #a3adb0;
}

.tube {
  width: 15px;
  height: 45px;
  border-radius: 8px;
  background: linear-gradient(#c3c4c9 80%, #4fc48a 80%, #3fc0a8);
}

.watermark {
  position: absolute;
  right: 22px;
  bottom: 5px;
  width: 152px;
  display: flex;
  flex-direction: column;
  font-family: "Liberation Sans", "Noto Sans CJK SC", sans-serif;
}

.wm-com, .wm-name {
  font-weight: 700;
  font-style: italic;
  color: #fff;
  -webkit-text-stroke: 2px #8a8a8a;
  paint-order: stroke fill;
}

.wm-com {
  align-self: flex-end;
  font-size: 20px;
  line-height: 10px;
  color: #f8f87c;
}

.wm-name {
  font-size: 34px;
  line-height: 32px;
}

.wm-sub {
  font-size: 18px;
  line-height: 24px;
  color: #666;
  white-space: nowrap;
}
```
